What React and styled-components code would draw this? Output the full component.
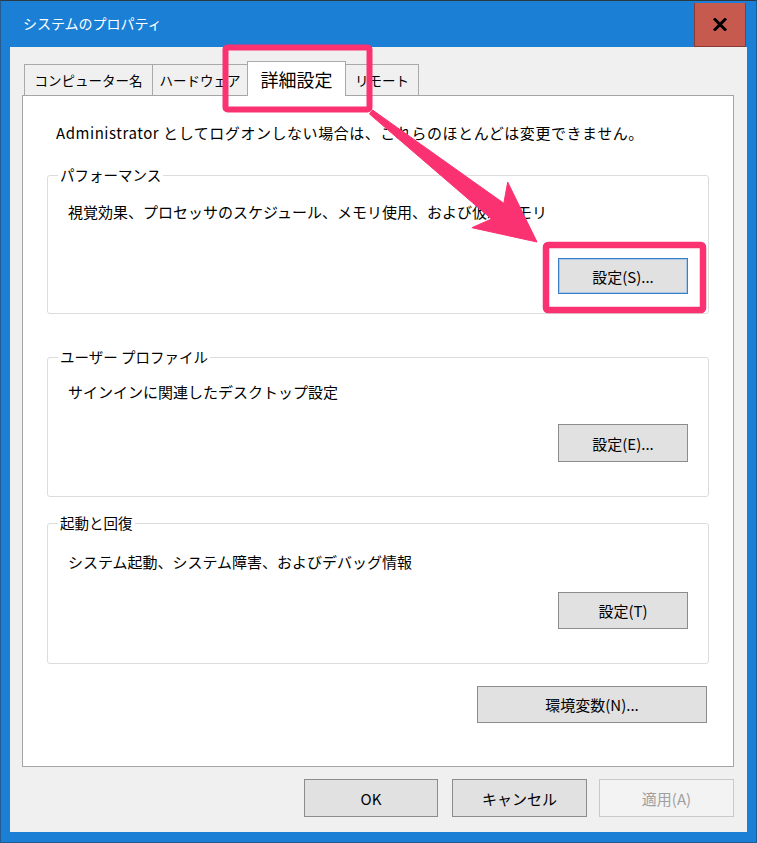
import styled, { createGlobalStyle } from 'styled-components';

const GlobalStyle = createGlobalStyle`
  html, body {
    margin: 0;
    padding: 0;
    background: #1a7fd5;
  }
  body {
    font-family: "Noto Sans CJK JP", "Noto Sans", sans-serif;
    color: #000;
  }
`;

const Window = styled.div`
  position: relative;
  box-sizing: border-box;
  width: 757px;
  height: 843px;
  display: flex;
  flex-direction: column;
  background: #1a7fd5;
  border: 1px solid #245a8f;
  border-top-color: #2e3842;
  padding: 0 9px 10px;
`;

const TitleBar = styled.div`
  height: 46px;
  display: flex;
  justify-content: space-between;
`;

const Title = styled.div`
  align-self: center;
  margin-top: -2px;
  padding-left: 13px;
  color: #fff;
  font-size: 14px;
  line-height: 20px;
`;

const CloseButton = styled.div`
  box-sizing: border-box;
  width: 52px;
  height: 44px;
  margin: 2px 1px 0 0;
  background: #c75a4f;
  border: 1px solid #8a3a33;
  border-top: none;
  display: flex;
  align-items: center;
  justify-content: center;
`;

const Body = styled.div`
  flex: 1;
  display: flex;
  flex-direction: column;
  background: #f0f0f0;
  padding: 14px 13px 15px 12px;
`;

const TabRow = styled.div`
  display: flex;
  align-items: flex-end;
  padding-left: 3px;
`;

const Tab = styled.div`
  position: relative;
  z-index: ${p => (p.$active ? 2 : 0)};
  box-sizing: border-box;
  width: ${p => p.$w}px;
  height: ${p => (p.$active ? 35 : 31)}px;
  margin-left: -1px;
  margin-bottom: ${p => (p.$active ? -1 : 0)}px;
  border: 1px solid #a9a9a9;
  border-bottom: none;
  background: ${p => (p.$active ? '#fff' : '#f0f0f0')};
  font-size: ${p => (p.$active ? 18 : 13.5)}px;
  line-height: 20px;
  display: flex;
  align-items: center;
  justify-content: center;
  white-space: nowrap;
`;

const Panel = styled.div`
  flex: 1;
  background: #fff;
  border: 1px solid #a5a5a5;
  padding: 27px 24px 0;
`;

const Notice = styled.div`
  padding-left: 9px;
  font-size: 15px;
  line-height: 20px;
  letter-spacing: 0.55px;
  white-space: nowrap;
`;

const Group = styled.fieldset`
  margin: ${p => p.$mt}px 0 0;
  padding: 0 20px ${p => p.$pb}px;
  border: 1px solid #dcdcdc;
  border-radius: 3px;
  min-inline-size: 0;
`;

const Legend = styled.legend`
  margin-left: -10px;
  padding: 0 2px;
  font-size: 14.5px;
  line-height: 20px;
`;

const Description = styled.div`
  margin-top: ${p => p.$mt}px;
  font-size: 15px;
  line-height: 20px;
  white-space: nowrap;
`;

const Button = styled.button`
  display: block;
  box-sizing: border-box;
  width: ${p => p.$w || 130}px;
  height: ${p => p.$h || 37}px;
  margin: ${p => p.$mt || 0}px ${p => p.$mr || 0}px 0 auto;
  padding: 0;
  font-family: inherit;
  font-size: 15px;
  color: #000;
  background: #e1e1e1;
  border: 1px solid ${p => (p.$focus ? '#3a7fc6' : '#8c8c8c')};
  box-shadow: ${p => (p.$focus ? 'inset 0 0 0 1px #a9c9ea' : 'none')};

  &:disabled {
    color: #a0a0a0;
    background: #f3f3f3;
    border-color: #c9c9c9;
  }
`;

const Footer = styled.div`
  display: flex;
  justify-content: flex-end;
  margin-top: 12px;
`;

const FooterButton = styled(Button)`
  height: 38px;
  margin: 0 0 0 ${p => p.$ml || 0}px;
`;

const Overlay = styled.svg`
  position: absolute;
  top: -1px;
  left: -1px;
  pointer-events: none;
  z-index: 5;
`;

const PINK = '#fa3272';

const Annotations = () => (
  <Overlay width="757" height="843" viewBox="0 0 757 843">
    <rect x="225.5" y="47.5" width="144" height="62" rx="2" fill="none" stroke={PINK} strokeWidth="6" />
    <rect x="546" y="245" width="157" height="65" rx="2" fill="none" stroke={PINK} strokeWidth="6.5" />
    <polygon
      points="369.5,114 491.5,219 471.9,227.7 537,242 507.7,182.1 503.8,203.3 372.5,110"
      fill={PINK}
      stroke={PINK}
      strokeWidth="1"
      strokeLinejoin="round"
    />
  </Overlay>
);

const App = () => (
  <>
    <GlobalStyle />
    <Window>
      <TitleBar>
        <Title>システムのプロパティ</Title>
        <CloseButton>
          <svg width="14" height="13" viewBox="0 0 14 13">
            <path d="M2 1.5 L12 11.5 M12 1.5 L2 11.5" stroke="#000" strokeWidth="3" strokeLinecap="square" />
          </svg>
        </CloseButton>
      </TitleBar>
      <Body>
        <TabRow>
          <Tab $w={129}>コンピューター名</Tab>
          <Tab $w={96}>ハードウェア</Tab>
          <Tab $w={99} $active>詳細設定</Tab>
          <Tab $w={74}>リモート</Tab>
        </TabRow>
        <Panel>
          <Notice>Administrator としてログオンしない場合は、これらのほとんどは変更できません。</Notice>

          <Group $mt={22} $pb={19}>
            <Legend>パフォーマンス</Legend>
            <Description $mt={17}>視覚効果、プロセッサのスケジュール、メモリ使用、および仮想メモリ</Description>
            <Button $mt={36} $h={36} $focus>設定(S)...</Button>
          </Group>

          <Group $mt={33} $pb={34}>
            <Legend>ユーザー プロファイル</Legend>
            <Description $mt={15}>サインインに関連したデスクトップ設定</Description>
            <Button $mt={22} $h={38}>設定(E)...</Button>
          </Group>

          <Group $mt={16} $pb={34}>
            <Legend>起動と回復</Legend>
            <Description $mt={19}>システム起動、システム障害、およびデバッグ情報</Description>
            <Button $mt={20}>設定(T)</Button>
          </Group>

          <Button $mt={22} $w={230} $mr={2}>環境変数(N)...</Button>
        </Panel>
        <Footer>
          <FooterButton $w={134}>OK</FooterButton>
          <FooterButton $w={135} $ml={14}>キャンセル</FooterButton>
          <FooterButton $w={135} $ml={12} disabled>適用(A)</FooterButton>
        </Footer>
      </Body>
      <Annotations />
    </Window>
  </>
);

export default App;
